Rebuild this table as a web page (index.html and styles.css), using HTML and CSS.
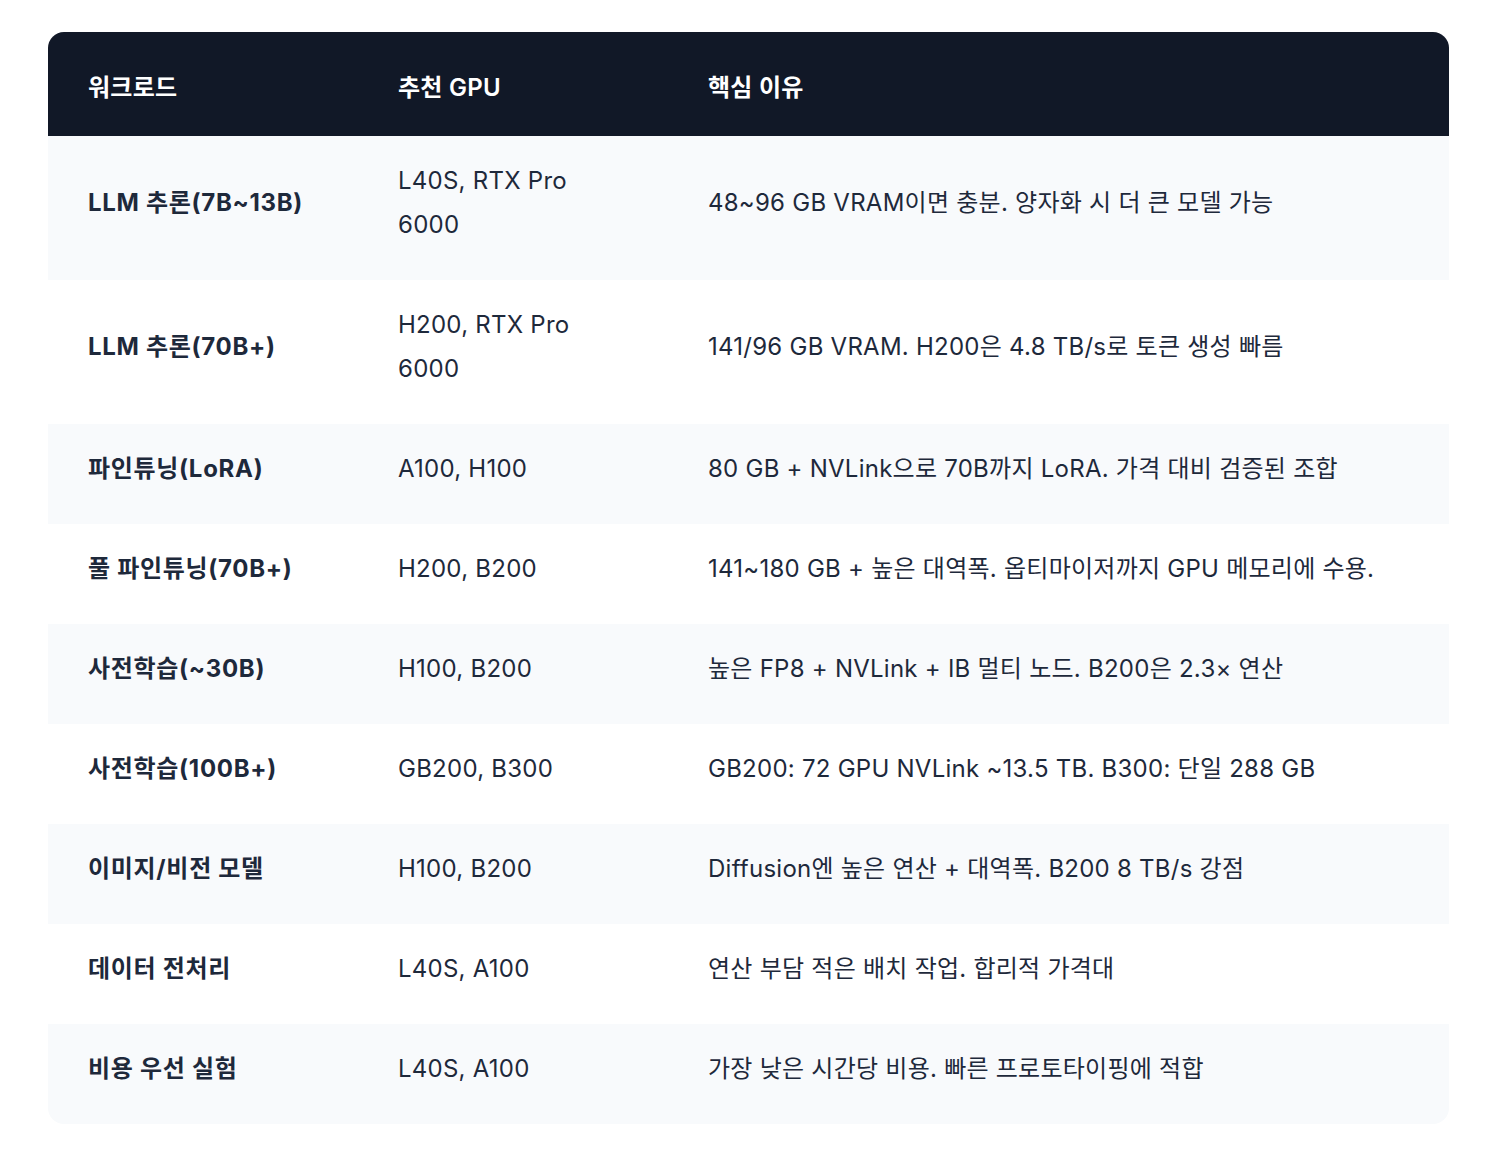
FILE: index.html
```html
<!DOCTYPE html>
<html lang="ko">
<head>
<meta charset="utf-8">
<link rel="stylesheet" href="styles.css">
</head>
<body>
<div class="wrap">
<table class="gpu">
<thead>
<tr><th>워크로드</th><th>추천 GPU</th><th>핵심 이유</th></tr>
</thead>
<tbody>
<tr><td class="w">LLM 추론(7B~13B)</td><td>L40S, RTX Pro 6000</td><td>48~96 GB VRAM이면 충분. 양자화 시 더 큰 모델 가능</td></tr>
<tr><td class="w">LLM 추론(70B+)</td><td>H200, RTX Pro 6000</td><td>141/96 GB VRAM. H200은 4.8 TB/s로 토큰 생성 빠름</td></tr>
<tr><td class="w">파인튜닝(LoRA)</td><td>A100, H100</td><td>80 GB + NVLink으로 70B까지 LoRA. 가격 대비 검증된 조합</td></tr>
<tr><td class="w">풀 파인튜닝(70B+)</td><td>H200, B200</td><td>141~180 GB + 높은 대역폭. 옵티마이저까지 GPU 메모리에 수용.</td></tr>
<tr><td class="w">사전학습(~30B)</td><td>H100, B200</td><td>높은 FP8 + NVLink + IB 멀티 노드. B200은 2.3× 연산</td></tr>
<tr><td class="w">사전학습(100B+)</td><td>GB200, B300</td><td>GB200: 72 GPU NVLink ~13.5 TB. B300: 단일 288 GB</td></tr>
<tr><td class="w">이미지/비전 모델</td><td>H100, B200</td><td>Diffusion엔 높은 연산 + 대역폭. B200 8 TB/s 강점</td></tr>
<tr><td class="w">데이터 전처리</td><td>L40S, A100</td><td>연산 부담 적은 배치 작업. 합리적 가격대</td></tr>
<tr><td class="w">비용 우선 실험</td><td>L40S, A100</td><td>가장 낮은 시간당 비용. 빠른 프로토타이핑에 적합</td></tr>
</tbody>
</table>
</div>
</body>
</html>
```
FILE: styles.css
```css
html, body {
  margin: 0;
  padding: 0;
  background: #ffffff;
}
body {
  font-family: Inter, "Noto Sans CJK KR", sans-serif;
  color: #1e293b;
}
.wrap {
  width: 1401px;
  margin: 32px 0 0 48px;
  border-radius: 16px;
  overflow: hidden;
}
.gpu {
  width: 100%;
  border-collapse: collapse;
  table-layout: fixed;
  font-size: 24px;
  line-height: 44px;
  letter-spacing: 0.25px;
}
.gpu th, .gpu td {
  text-align: left;
  vertical-align: middle;
  padding: 23px 40px 33px;
}
.gpu th:nth-child(1), .gpu th:nth-child(2) { width: 230px; }
.gpu thead th {
  background: #111827;
  color: #ffffff;
  font-weight: 600;
  padding-top: 34px;
  padding-bottom: 26px;
}
.gpu tbody tr:nth-child(odd) { background: #f8fafc; }
.gpu tbody tr:nth-child(even) { background: #ffffff; }
.gpu td.w { font-weight: 700; letter-spacing: 0.7px; }
```
